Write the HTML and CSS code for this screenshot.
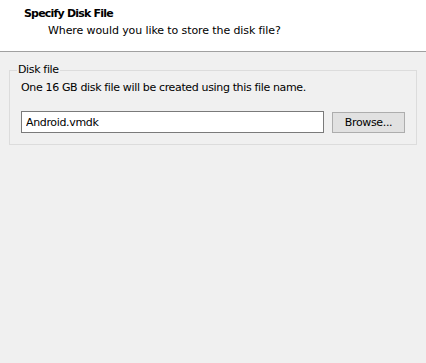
FILE: index.html
```html
<!DOCTYPE html>
<html>
<head>
  <title>Specify Disk File</title>
  <link rel="stylesheet" href="styles.css">
</head>
<body>
  <div class="header">
    <div class="title">Specify Disk File</div>
    <div class="subtitle">Where would you like to store the disk file?</div>
  </div>
  <div class="content">
    <fieldset class="group">
      <legend>Disk file</legend>
      <p class="info">One 16 GB disk file will be created using this file name.</p>
      <div class="file-row">
        <input type="text" class="file-input" value="Android.vmdk">
        <button class="browse">Browse...</button>
      </div>
    </fieldset>
  </div>
</body>
</html>
```
FILE: styles.css
```css
body {
  margin: 0;
  font-family: 'DejaVu Sans', sans-serif;
  font-size: 11px;
  letter-spacing: -0.35px;
  color: #000;
  background-color: #f0f0f0;
  height: 363px;
}
.header {
  background: white;
  height: 52px;
  border-bottom: 1px solid #a0a0a0;
  box-sizing: border-box;
  padding: 7px 0 0 24px;
}
.title {
  font-weight: bold;
  letter-spacing: -0.8px;
  line-height: 14px;
}
.subtitle {
  padding-left: 24px;
  letter-spacing: -0.1px;
  line-height: 14px;
  margin-top: 3px;
}
.content {
  padding: 11px 10px 0 9px;
}
.group {
  margin: 0;
  padding: 0 11px 11px 11px;
  border: 1px solid #dcdcdc;
}
.group legend {
  padding: 0 1px;
  margin-left: -4px;
  line-height: 14px;
}
.info {
  margin: 4px 0 0 0;
  line-height: 14px;
}
.file-row {
  display: flex;
  align-items: center;
  margin-top: 16px;
}
.file-input {
  width: 303px;
  height: 22px;
  box-sizing: border-box;
  border: 1px solid #7a7a7a;
  font-family: inherit;
  font-size: 11px;
  letter-spacing: inherit;
  padding: 0 4px;
  margin: 0;
  background: white;
  outline: none;
}
.browse {
  margin-left: 8px;
  width: 73px;
  height: 21px;
  box-sizing: border-box;
  background: #e1e1e1;
  border: 1px solid #adadad;
  font-family: inherit;
  font-size: 11px;
  letter-spacing: inherit;
  padding: 0;
  color: #000;
}
```
